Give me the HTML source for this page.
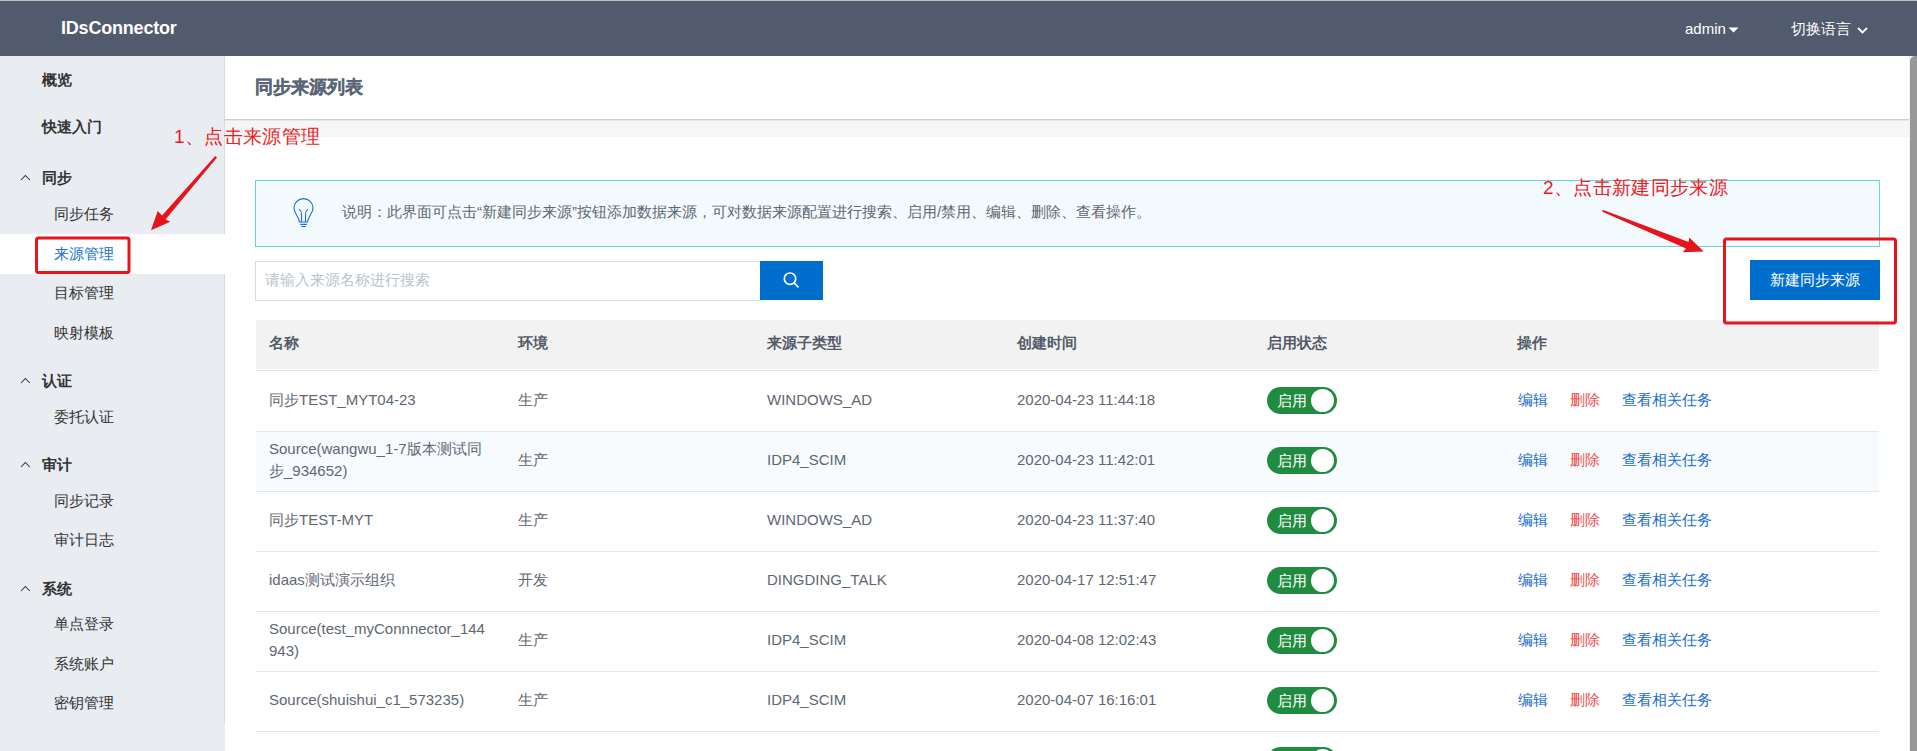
<!DOCTYPE html>
<html><head><meta charset="utf-8">
<style>
*{box-sizing:border-box;margin:0;padding:0}
html,body{width:1917px;height:751px;overflow:hidden;background:#fff;font-family:"Liberation Sans",sans-serif;color:#333}
.abs{position:absolute}
#topline{left:0;top:0;width:1917px;height:1px;background:#c3c1bf}
#hdr{left:0;top:1px;width:1917px;height:55px;background:#525a6e}
#logo{left:61px;top:18px;font-size:18px;font-weight:bold;color:#fff;line-height:20px;letter-spacing:-0.2px}
.hdr-r{color:#fff;font-size:15px;line-height:17px;top:20px}
#side{left:0;top:56px;width:225px;height:695px;background:#e9ecf1}
#sideborder{left:224px;top:56px;width:1px;height:667px;background:#d6dae2}
.mi{position:absolute;font-size:15px;line-height:16px;color:#333;white-space:nowrap}
.mb{font-weight:bold;left:42px}
.ms{left:54px}
.caret{position:absolute;left:21px;width:10px;height:6px}
#active{left:0;top:234px;width:225px;height:40px;background:#fff}
#ph{left:225px;top:56px;width:1685px;height:63px;background:#fff}
#phline{left:225px;top:119px;width:1685px;height:1px;background:#cdcfd2;box-shadow:0 1px 0 #e6e7e9}
#band{left:225px;top:120px;width:1685px;height:17px;background:#f5f6f8}
#title{left:255px;top:77px;font-size:17.5px;font-weight:bold;color:#5a6675;line-height:20px;-webkit-text-stroke:0.3px #5a6675}
#note{left:255px;top:180px;width:1625px;height:67px;border:1px solid #68d3d9;background:#f2fafd}
#notetxt{left:342px;top:204px;font-size:15px;color:#5f6773;line-height:16px;white-space:nowrap}
#search{left:255px;top:261px;width:506px;height:40px;border:1px solid #d7dce3;background:#fff}
#ph-txt{left:265px;top:272px;font-size:15px;color:#bcc3cc;line-height:16px}
#sbtn{left:760px;top:261px;width:63px;height:39px;background:#006ecc}
#nbtn{left:1750px;top:260px;width:130px;height:40px;background:#006ecc;color:#fff;font-size:15px;line-height:40px;text-align:center}
#scroll{left:1910px;top:56px;width:7px;height:695px;background:#989898;border-radius:5px 0 0 0}
#scrolltrack{left:1909px;top:56px;width:1px;height:695px;background:#f0f0f0}
.th{left:256px;top:320px;width:1623px;height:49px;background:#f2f2f2}
.thl{left:256px;top:368px;width:1623px;height:2px;background:#e6e6e6}
.col{position:absolute;font-size:15px;line-height:16px;white-space:nowrap}
.hc{font-weight:bold;color:#535b69;top:335px}
.row{position:absolute;left:256px;width:1623px;height:60px}
.rl{position:absolute;left:256px;width:1623px;height:1px;background:#e6e6e6}
.td{position:absolute;font-size:15px;line-height:22px;color:#5f6773;white-space:nowrap}
.sw{position:absolute;left:1267px;width:70px;height:27px;margin-top:1px;border-radius:13.5px;background:#1f8c3f}
.sw i{position:absolute;right:3px;top:2px;width:23px;height:23px;border-radius:50%;background:#fff}
.sw b{position:absolute;left:10px;top:5px;font-weight:normal;color:#fff;font-size:15px;line-height:17px}
.lk{position:absolute;font-size:15px;line-height:16px;white-space:nowrap}
.red{color:#ee4a4a}
.blue{color:#1a6ecf}
.ann{position:absolute;color:#ec1c24;font-size:19px;letter-spacing:0.35px;line-height:22px;white-space:nowrap}
</style></head><body>
<div id="topline" class="abs"></div>
<div id="hdr" class="abs"></div>
<div id="logo" class="abs">IDsConnector</div>
<div class="abs hdr-r" style="left:1685px">admin</div>
<div class="abs hdr-r" style="left:1791px">切换语言</div>

<div id="side" class="abs"></div>
<div id="sideborder" class="abs"></div>
<div id="active" class="abs"></div>

<div class="mi mb" style="top:72px">概览</div>
<div class="mi mb" style="top:119px">快速入门</div>
<div class="mi mb" style="top:170px">同步</div>
<div class="mi ms" style="top:206px">同步任务</div>
<div class="mi ms" style="top:246px;color:#1a73d0">来源管理</div>
<div class="mi ms" style="top:285px">目标管理</div>
<div class="mi ms" style="top:325px">映射模板</div>
<div class="mi mb" style="top:373px">认证</div>
<div class="mi ms" style="top:409px">委托认证</div>
<div class="mi mb" style="top:457px">审计</div>
<div class="mi ms" style="top:493px">同步记录</div>
<div class="mi ms" style="top:532px">审计日志</div>
<div class="mi mb" style="top:581px">系统</div>
<div class="mi ms" style="top:616px">单点登录</div>
<div class="mi ms" style="top:656px">系统账户</div>
<div class="mi ms" style="top:695px">密钥管理</div>

<div id="ph" class="abs"></div>
<div id="band" class="abs"></div>
<div id="phline" class="abs"></div>
<div id="title" class="abs">同步来源列表</div>

<div id="note" class="abs"></div>
<div id="notetxt" class="abs">说明：此界面可点击“新建同步来源”按钮添加数据来源，可对数据来源配置进行搜索、启用/禁用、编辑、删除、查看操作。</div>

<div id="search" class="abs"></div>
<div id="ph-txt" class="abs">请输入来源名称进行搜索</div>
<div id="sbtn" class="abs"></div>
<div id="nbtn" class="abs">新建同步来源</div>

<div class="abs th"></div>
<div class="col hc" style="left:269px">名称</div>
<div class="col hc" style="left:518px">环境</div>
<div class="col hc" style="left:767px">来源子类型</div>
<div class="col hc" style="left:1017px">创建时间</div>
<div class="col hc" style="left:1267px">启用状态</div>
<div class="col hc" style="left:1517px">操作</div>

<div class="rl" style="top:370px"></div>
<div class="row" style="top:432px;height:59px;background:#f7fbfe"></div>
<div class="rl" style="top:431px"></div>
<div class="rl" style="top:491px"></div>
<div class="rl" style="top:551px"></div>
<div class="rl" style="top:611px"></div>
<div class="rl" style="top:671px"></div>
<div class="rl" style="top:731px"></div>
<div class="td" style="left:269px;top:389px">同步TEST_MYT04-23</div>
<div class="td" style="left:518px;top:389px">生产</div>
<div class="td" style="left:767px;top:389px">WINDOWS_AD</div>
<div class="td" style="left:1017px;top:389px">2020-04-23 11:44:18</div>
<div class="sw" style="top:386px"><b>启用</b><i></i></div>
<div class="lk blue" style="left:1518px;top:392px">编辑</div>
<div class="lk red" style="left:1570px;top:392px">删除</div>
<div class="lk blue" style="left:1622px;top:392px">查看相关任务</div>
<div class="td" style="left:269px;top:438px">Source(wangwu_1-7版本测试同<br>步_934652)</div>
<div class="td" style="left:518px;top:449px">生产</div>
<div class="td" style="left:767px;top:449px">IDP4_SCIM</div>
<div class="td" style="left:1017px;top:449px">2020-04-23 11:42:01</div>
<div class="sw" style="top:446px"><b>启用</b><i></i></div>
<div class="lk blue" style="left:1518px;top:452px">编辑</div>
<div class="lk red" style="left:1570px;top:452px">删除</div>
<div class="lk blue" style="left:1622px;top:452px">查看相关任务</div>
<div class="td" style="left:269px;top:509px">同步TEST-MYT</div>
<div class="td" style="left:518px;top:509px">生产</div>
<div class="td" style="left:767px;top:509px">WINDOWS_AD</div>
<div class="td" style="left:1017px;top:509px">2020-04-23 11:37:40</div>
<div class="sw" style="top:506px"><b>启用</b><i></i></div>
<div class="lk blue" style="left:1518px;top:512px">编辑</div>
<div class="lk red" style="left:1570px;top:512px">删除</div>
<div class="lk blue" style="left:1622px;top:512px">查看相关任务</div>
<div class="td" style="left:269px;top:569px">idaas测试演示组织</div>
<div class="td" style="left:518px;top:569px">开发</div>
<div class="td" style="left:767px;top:569px">DINGDING_TALK</div>
<div class="td" style="left:1017px;top:569px">2020-04-17 12:51:47</div>
<div class="sw" style="top:566px"><b>启用</b><i></i></div>
<div class="lk blue" style="left:1518px;top:572px">编辑</div>
<div class="lk red" style="left:1570px;top:572px">删除</div>
<div class="lk blue" style="left:1622px;top:572px">查看相关任务</div>
<div class="td" style="left:269px;top:618px">Source(test_myConnnector_144<br>943)</div>
<div class="td" style="left:518px;top:629px">生产</div>
<div class="td" style="left:767px;top:629px">IDP4_SCIM</div>
<div class="td" style="left:1017px;top:629px">2020-04-08 12:02:43</div>
<div class="sw" style="top:626px"><b>启用</b><i></i></div>
<div class="lk blue" style="left:1518px;top:632px">编辑</div>
<div class="lk red" style="left:1570px;top:632px">删除</div>
<div class="lk blue" style="left:1622px;top:632px">查看相关任务</div>
<div class="td" style="left:269px;top:689px">Source(shuishui_c1_573235)</div>
<div class="td" style="left:518px;top:689px">生产</div>
<div class="td" style="left:767px;top:689px">IDP4_SCIM</div>
<div class="td" style="left:1017px;top:689px">2020-04-07 16:16:01</div>
<div class="sw" style="top:686px"><b>启用</b><i></i></div>
<div class="lk blue" style="left:1518px;top:692px">编辑</div>
<div class="lk red" style="left:1570px;top:692px">删除</div>
<div class="lk blue" style="left:1622px;top:692px">查看相关任务</div>
<div class="sw" style="top:746px"><b>启用</b><i></i></div>

<svg class="abs" style="left:0;top:0" width="1917" height="751" viewBox="0 0 1917 751">
 <g fill="none" stroke="#333" stroke-width="1.05">
  <path d="M21,180.0 L25.4,175.5 L29.8,180.0"/>
  <path d="M21,383.0 L25.4,378.5 L29.8,383.0"/>
  <path d="M21,467.0 L25.4,462.5 L29.8,467.0"/>
  <path d="M21,591.0 L25.4,586.5 L29.8,591.0"/>
 </g>
 <path d="M1728.5,27.5 L1738.5,27.5 L1733.5,32.5 Z" fill="#fff"/>
 <path d="M1858,28 L1862.5,32.5 L1867,28" fill="none" stroke="#fff" stroke-width="1.8"/>
 <g fill="none" stroke="#1a6bdc" stroke-width="1.1">
  <path d="M299.4,222 C299.4,217 294,213.8 294,208.1 A9.5,9.5 0 1 1 313,208.1 C313,213.8 307.6,217 307.6,222 Z"/>
  <path d="M299.2,209.2 Q301.5,211.2 301.5,214.5 V222 M307.8,209.2 Q305.5,211.2 305.5,214.5 V222"/>
  <path d="M300.2,224.4 H306.8 M301.2,226.5 H305.8"/>
 </g>
 <g fill="none" stroke="#fff" stroke-width="1.7">
  <circle cx="790" cy="278.7" r="5.7"/>
  <path d="M794.2,282.9 L798.5,287.3"/>
 </g>
 <rect x="36.5" y="238" width="92.5" height="34.5" rx="2" fill="none" stroke="#e8141c" stroke-width="3"/>
 <rect x="1724.5" y="239" width="171" height="84" rx="2" fill="none" stroke="#e8141c" stroke-width="3"/>
 <path d="M151,230.3 L157.7,211 L162,215.5 L215.2,156 L217,157.4 L165.5,219.5 L170.2,221.7 Z" fill="#e8141c"/>
 <path d="M1703.7,251.4 L1689.3,237.4 L1688.6,242.1 L1602.6,209.8 L1602.4,211.8 L1686,248.6 L1682.7,252.3 Z" fill="#e8141c"/>
</svg>
<div class="ann" style="left:174px;top:126px">1、点击来源管理</div>
<div class="ann" style="left:1543px;top:177px">2、点击新建同步来源</div>

<div id="scrolltrack" class="abs"></div>
<div id="scroll" class="abs"></div>
</body></html>
